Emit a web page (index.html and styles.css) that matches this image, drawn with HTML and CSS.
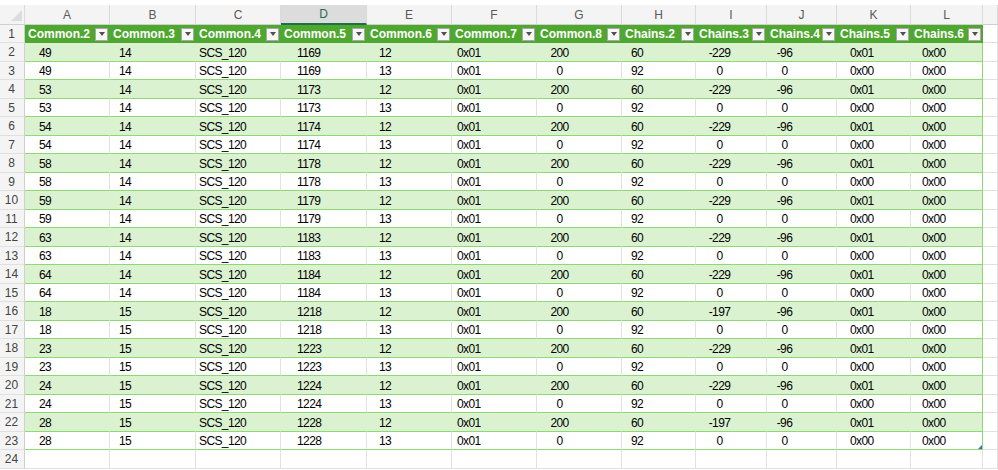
FILE: index.html
```html
<!DOCTYPE html>
<html>
<head>
<meta charset="utf-8">
<link rel="stylesheet" href="styles.css">
</head>
<body>
<div class="sheet">
  <div class="topstrip"></div>
  <div class="row colhdr">
    <div class="corner"><span class="tri"></span></div>
    <div>A</div><div>B</div><div>C</div><div class="sel">D</div><div>E</div><div>F</div><div>G</div><div>H</div><div>I</div><div>J</div><div>K</div><div>L</div><div></div>
  </div>
  <div class="row thead">
    <div class="rh">1</div>
    <div class="th"><span>Common.2</span><i class="fb"></i></div>
    <div class="th"><span>Common.3</span><i class="fb"></i></div>
    <div class="th"><span>Common.4</span><i class="fb"></i></div>
    <div class="th"><span>Common.5</span><i class="fb"></i></div>
    <div class="th"><span>Common.6</span><i class="fb"></i></div>
    <div class="th"><span>Common.7</span><i class="fb"></i></div>
    <div class="th"><span>Common.8</span><i class="fb"></i></div>
    <div class="th"><span>Chains.2</span><i class="fb"></i></div>
    <div class="th"><span>Chains.3</span><i class="fb"></i></div>
    <div class="th"><span>Chains.4</span><i class="fb"></i></div>
    <div class="th"><span>Chains.5</span><i class="fb"></i></div>
    <div class="th"><span>Chains.6</span><i class="fb"></i></div>
    <div class="g"></div>
  </div>
  <div id="body"></div>
  <div class="row blank">
    <div class="rh">24</div>
    <div class="g"></div><div class="g"></div><div class="g"></div><div class="g"></div><div class="g"></div><div class="g"></div><div class="g"></div><div class="g"></div><div class="g"></div><div class="g"></div><div class="g"></div><div class="g"></div><div class="g"></div>
  </div>
</div>
<script src="app.js"></script>
</body>
</html>
```
FILE: app.js
```js
const data = [
  ["49","14","SCS_120","1169","12","0x01","200","60","-229","-96","0x01","0x00"],
  ["49","14","SCS_120","1169","13","0x01","0","92","0","0","0x00","0x00"],
  ["53","14","SCS_120","1173","12","0x01","200","60","-229","-96","0x01","0x00"],
  ["53","14","SCS_120","1173","13","0x01","0","92","0","0","0x00","0x00"],
  ["54","14","SCS_120","1174","12","0x01","200","60","-229","-96","0x01","0x00"],
  ["54","14","SCS_120","1174","13","0x01","0","92","0","0","0x00","0x00"],
  ["58","14","SCS_120","1178","12","0x01","200","60","-229","-96","0x01","0x00"],
  ["58","14","SCS_120","1178","13","0x01","0","92","0","0","0x00","0x00"],
  ["59","14","SCS_120","1179","12","0x01","200","60","-229","-96","0x01","0x00"],
  ["59","14","SCS_120","1179","13","0x01","0","92","0","0","0x00","0x00"],
  ["63","14","SCS_120","1183","12","0x01","200","60","-229","-96","0x01","0x00"],
  ["63","14","SCS_120","1183","13","0x01","0","92","0","0","0x00","0x00"],
  ["64","14","SCS_120","1184","12","0x01","200","60","-229","-96","0x01","0x00"],
  ["64","14","SCS_120","1184","13","0x01","0","92","0","0","0x00","0x00"],
  ["18","15","SCS_120","1218","12","0x01","200","60","-197","-96","0x01","0x00"],
  ["18","15","SCS_120","1218","13","0x01","0","92","0","0","0x00","0x00"],
  ["23","15","SCS_120","1223","12","0x01","200","60","-229","-96","0x01","0x00"],
  ["23","15","SCS_120","1223","13","0x01","0","92","0","0","0x00","0x00"],
  ["24","15","SCS_120","1224","12","0x01","200","60","-229","-96","0x01","0x00"],
  ["24","15","SCS_120","1224","13","0x01","0","92","0","0","0x00","0x00"],
  ["28","15","SCS_120","1228","12","0x01","200","60","-197","-96","0x01","0x00"],
  ["28","15","SCS_120","1228","13","0x01","0","92","0","0","0x00","0x00"]
];
const body = document.getElementById("body");
data.forEach((r, i) => {
  const row = document.createElement("div");
  row.className = "row data " + (i % 2 === 0 ? "band" : "plain");
  const rh = document.createElement("div");
  rh.className = "rh";
  rh.textContent = String(i + 2);
  row.appendChild(rh);
  r.forEach((v) => {
    const c = document.createElement("div");
    c.className = "td";
    c.textContent = v;
    row.appendChild(c);
  });
  if (i === data.length - 1) {
    const h = document.createElement("span");
    h.className = "handle";
    row.lastChild.appendChild(h);
  }
  const g = document.createElement("div");
  g.className = "g";
  row.appendChild(g);
  body.appendChild(row);
});
```
FILE: styles.css
```css
html, body {
  margin: 0;
  padding: 0;
  background: #ffffff;
}
.sheet {
  width: 998px;
  height: 470px;
  overflow: hidden;
  font-family: "Liberation Sans", Arial, sans-serif;
  font-size: 12px;
  color: #000;
}
.topstrip {
  height: 5px;
  background: #ffffff;
}
.row {
  display: grid;
  grid-template-columns: 25px 85px 86px 85px 86px 85px 85px 85px 74px 71px 70px 74px 72px 1fr;
  height: 18.5px;
}
.row > div {
  box-sizing: border-box;
  min-width: 0;
  overflow: hidden;
  white-space: nowrap;
}

/* column header */
.colhdr {
  height: 20px;
  background: #f4f4f4;
}
.colhdr > div {
  display: flex;
  align-items: center;
  justify-content: center;
  border-right: 1px solid #dadada;
  border-bottom: 1px solid #cfcfcf;
  font-size: 12px;
  color: #5a5a5a;
}
.colhdr > .sel {
  background: #dcdcdc;
  color: #1f6f4a;
  border-bottom: 2px solid #1f6f4a;
}
.corner {
  position: relative;
}
.corner .tri {
  position: absolute;
  right: 2px;
  bottom: 3px;
  width: 0;
  height: 0;
  border-left: 11px solid transparent;
  border-bottom: 11px solid #dcdcdc;
}

/* row header */
.rh {
  display: flex;
  align-items: center;
  justify-content: center;
  background: #f4f4f4;
  border-right: 1px solid #cfcfcf;
  border-bottom: 1px solid #e0e0e0;
  font-size: 12px;
  color: #444;
  padding-right: 1px;
  padding-top: 1px;
}

/* table header */
.thead {
  height: 18px;
}
.th {
  display: flex;
  align-items: center;
  justify-content: space-between;
  background: #4ea72e;
  color: #ffffff;
  font-weight: bold;
  font-size: 12px;
  padding-left: 3px;
}
.fb {
  flex: none;
  width: 13px;
  height: 13px;
  box-sizing: border-box;
  margin-right: 2px;
  background: #f7f7f7;
  border: 1px solid #a8a8a8;
  display: flex;
  align-items: center;
  justify-content: center;
}
.fb::after {
  content: "";
  width: 0;
  height: 0;
  border-left: 3.5px solid transparent;
  border-right: 3.5px solid transparent;
  border-top: 4px solid #505050;
}

/* data cells */
.td {
  position: relative;
  display: flex;
  align-items: center;
  border-bottom: 1px solid #8ed973;
  border-right: 1px solid #e1e1e1;
  padding-top: 2px;
  font-size: 12px;
  letter-spacing: -0.6px;
}
.band .td {
  background: #daf2d0;
  border-right-color: transparent;
}
.data > .td:nth-child(13) {
  border-right-color: #8ed973;
}
.g {
  border-right: 1px solid #e1e1e1;
  border-bottom: 1px solid #e1e1e1;
}
.data > .td:nth-child(2) { padding-left: 14px; }
.data > .td:nth-child(3) { padding-left: 9px; }
.data > .td:nth-child(4) { padding-left: 3px; }
.data > .td:nth-child(5) { padding-left: 16px; }
.data > .td:nth-child(6) { padding-left: 12px; }
.data > .td:nth-child(7) { padding-left: 5px; }
.data > .td:nth-child(8) { justify-content: center; padding-right: 39px; }
.data > .td:nth-child(9) { padding-left: 9px; }
.data > .td:nth-child(10) { justify-content: center; padding-right: 23px; }
.data > .td:nth-child(11) { justify-content: center; padding-right: 34px; }
.data > .td:nth-child(12) { padding-left: 13px; }
.data > .td:nth-child(13) { padding-left: 11px; }

.handle {
  position: absolute;
  right: 0;
  bottom: 0;
  width: 0;
  height: 0;
  border-left: 4px solid transparent;
  border-bottom: 4px solid #3b6fc2;
}
```
